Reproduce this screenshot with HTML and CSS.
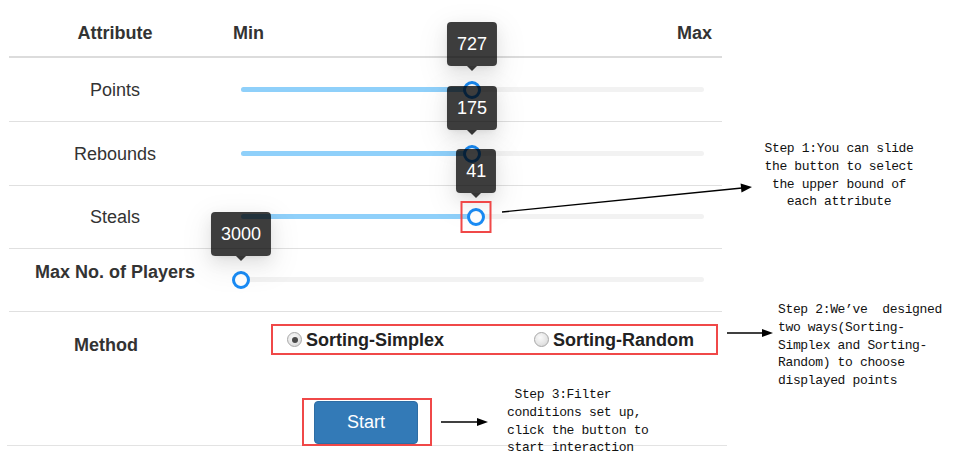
FILE: index.html
```html
<!DOCTYPE html>
<html>
<head>
<meta charset="utf-8">
<link rel="stylesheet" href="styles.css">
</head>
<body>
<div class="page">
  <div class="panel">
    <div class="head">
      <div class="h-attr">Attribute</div>
      <div class="h-range"><span>Min</span><span>Max</span></div>
    </div>

    <div class="row">
      <div class="label">Points</div>
      <div class="cell">
        <div class="slider">
          <div class="rail"></div>
          <div class="track" style="width:49.9%"></div>
          <div class="handle" style="left:49.9%"><div class="tip">727</div></div>
        </div>
      </div>
    </div>

    <div class="row">
      <div class="label">Rebounds</div>
      <div class="cell">
        <div class="slider">
          <div class="rail"></div>
          <div class="track" style="width:49.9%"></div>
          <div class="handle" style="left:49.9%"><div class="tip">175</div></div>
        </div>
      </div>
    </div>

    <div class="row row-short">
      <div class="label">Steals</div>
      <div class="cell">
        <div class="slider">
          <div class="rail"></div>
          <div class="track" style="width:50.8%"></div>
          <div class="handle" style="left:50.8%"><div class="tip">41</div><div class="mark"></div></div>
        </div>
      </div>
    </div>

    <div class="row row-short">
      <div class="label label-bold label-up">Max No. of Players</div>
      <div class="cell">
        <div class="slider">
          <div class="rail"></div>
          <div class="track" style="width:0%"></div>
          <div class="handle" style="left:0%"><div class="tip">3000</div></div>
        </div>
      </div>
    </div>

    <div class="method">
      <div class="label label-bold method-label">Method</div>
      <div class="radios">
        <label class="opt"><span class="radio checked"></span><span class="opt-text">Sorting-Simplex</span></label>
        <label class="opt opt-2"><span class="radio"></span><span class="opt-text">Sorting-Random</span></label>
      </div>
    </div>

    <div class="start-row">
      <div class="start-box"><button class="start">Start</button></div>
    </div>
    <div class="foot-line"></div>
  </div>

  <svg class="arrows" width="954" height="468" viewBox="0 0 954 468">
    <line x1="502" y1="212" x2="742" y2="188" stroke="#000" stroke-width="1.4"/>
    <polygon points="752,187 740.6,183.6 741.5,192.4" fill="#000"/>
    <line x1="727" y1="333" x2="763" y2="333" stroke="#000" stroke-width="1.4"/>
    <polygon points="773,333 762,329 762,337" fill="#000"/>
    <line x1="441" y1="422" x2="478" y2="422" stroke="#000" stroke-width="1.4"/>
    <polygon points="488,422 477,418 477,426" fill="#000"/>
  </svg>

  <div class="note note-1">Step 1:You can slide
the button to select
the upper bound of
each attribute</div>
  <div class="note note-2">Step 2:We’ve  designed
two ways(Sorting-
Simplex and Sorting-
Random) to choose
displayed points</div>
  <div class="note note-3"> Step 3:Filter
conditions set up,
click the button to
start interaction</div>
</div>
</body>
</html>
```
FILE: styles.css
```css
html, body {
  margin: 0;
  padding: 0;
  background: #fff;
}

.page {
  position: relative;
  width: 954px;
  height: 468px;
  overflow: hidden;
  font-family: "Liberation Sans", Arial, sans-serif;
  color: #333;
}

.panel {
  margin-left: 9px;
  width: 713px;
}

.head {
  display: grid;
  grid-template-columns: 212px 1fr;
  align-items: end;
  height: 58px;
  box-sizing: border-box;
  padding-bottom: 12px;
  border-bottom: 2px solid #dcdcdc;
  font-weight: bold;
  font-size: 18px;
  line-height: 22px;
}

.h-attr {
  text-align: center;
}

.h-range {
  display: flex;
  justify-content: space-between;
  padding: 0 10px 0 12px;
}

.row {
  display: grid;
  grid-template-columns: 212px 1fr;
  align-items: center;
  height: 64px;
  box-sizing: border-box;
  border-bottom: 1px solid #e0e0e0;
}

.row-short {
  height: 63px;
}

.label {
  text-align: center;
  font-size: 18px;
  line-height: 22px;
}

.label-bold {
  font-weight: bold;
}

.label-up {
  padding-bottom: 16px;
}

.cell {
  padding: 0 18px 0 20px;
}

.slider {
  position: relative;
  height: 18px;
}

.rail {
  position: absolute;
  left: 0;
  right: 0;
  top: 6px;
  height: 5px;
  border-radius: 3px;
  background: #f2f2f2;
}

.track {
  position: absolute;
  left: 0;
  top: 6px;
  height: 5px;
  border-radius: 3px;
  background: #8fd0fa;
}

.handle {
  position: absolute;
  top: 0;
  width: 18px;
  height: 18px;
  margin-left: -9px;
  box-sizing: border-box;
  border: 3px solid #1a8cf5;
  border-radius: 50%;
  background: #fff;
}

.tip {
  position: absolute;
  left: 50%;
  bottom: 30px;
  transform: translateX(-50%);
  height: 44px;
  padding: 0 10px;
  line-height: 44px;
  font-size: 18px;
  color: #fff;
  white-space: nowrap;
  background: rgba(0, 0, 0, 0.76);
  border-radius: 4px;
  box-shadow: 0 3px 6px -4px rgba(0, 0, 0, 0.12), 0 6px 16px rgba(0, 0, 0, 0.08), 0 9px 28px 8px rgba(0, 0, 0, 0.05);
}

.tip::after {
  content: "";
  position: absolute;
  left: 50%;
  top: 100%;
  margin-left: -5px;
  border-left: 5px solid transparent;
  border-right: 5px solid transparent;
  border-top: 5px solid rgba(0, 0, 0, 0.76);
}

.mark {
  position: absolute;
  left: 50%;
  top: 50%;
  width: 31px;
  height: 32px;
  box-sizing: border-box;
  transform: translate(-50%, -50%);
  border: 2px solid #f04848;
}

.method {
  display: grid;
  grid-template-columns: 212px 1fr;
  align-items: center;
  padding-top: 11px;
}

.method-label {
  padding-right: 18px;
  padding-top: 11px;
}

.radios {
  display: flex;
  align-items: center;
  margin-left: 50px;
  width: 447px;
  height: 31px;
  box-sizing: border-box;
  padding-left: 14px;
  border: 2px solid #f04848;
}

.opt {
  display: flex;
  align-items: center;
  font-size: 18px;
  font-weight: bold;
  line-height: 22px;
  color: #222;
}

.opt-2 {
  margin-left: 90px;
}

.radio {
  position: relative;
  display: inline-block;
  width: 15px;
  height: 15px;
  margin-right: 4px;
  box-sizing: border-box;
  border: 1px solid #a8a8a8;
  border-radius: 50%;
  background: radial-gradient(circle at 40% 35%, #fafafa 0%, #e6e6e6 55%, #cfcfcf 100%);
}

.radio.checked::after {
  content: "";
  position: absolute;
  left: 3.5px;
  top: 3.5px;
  width: 6px;
  height: 6px;
  border-radius: 50%;
  background: #4a4a4a;
}

.start-row {
  position: relative;
  z-index: 1;
  margin-top: 42px;
  margin-bottom: -1px;
  padding-left: 293px;
}

.start-box {
  width: 130px;
  height: 48px;
  box-sizing: border-box;
  border: 2px solid #f04848;
  padding: 1px 0 0 10px;
}

.start {
  display: block;
  width: 104px;
  height: 43px;
  border: 1px solid #2e6da4;
  border-radius: 4px;
  background: #337ab7;
  color: #fff;
  font-family: "Liberation Sans", Arial, sans-serif;
  font-size: 18px;
  padding: 0;
}

.foot-line {
  margin-left: -2px;
  width: 720px;
  height: 1px;
  background: #e3e3e3;
}

.arrows {
  position: absolute;
  left: 0;
  top: 0;
  pointer-events: none;
}

.note {
  position: absolute;
  font-family: "Liberation Mono", "Courier New", monospace;
  font-size: 13px;
  letter-spacing: -0.35px;
  line-height: 17.8px;
  color: #111;
  white-space: pre;
}

.note-1 {
  left: 739px;
  top: 140px;
  width: 200px;
  text-align: center;
}

.note-2 {
  left: 778px;
  top: 301px;
}

.note-3 {
  left: 507px;
  top: 386px;
}
```
